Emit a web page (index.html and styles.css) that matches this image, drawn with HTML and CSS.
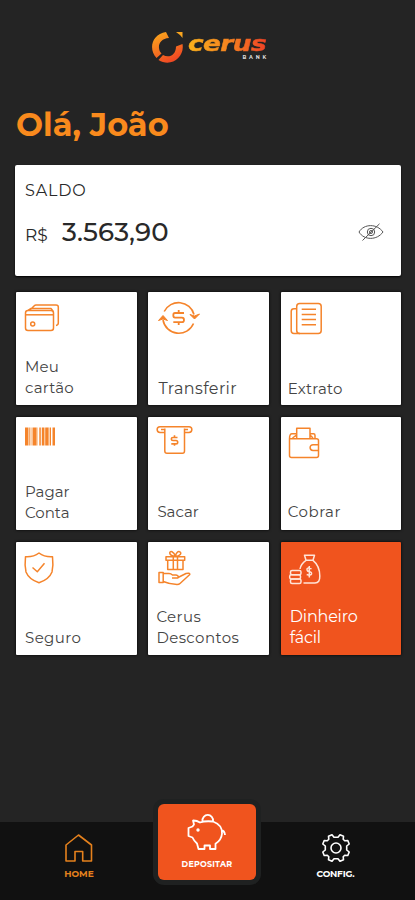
FILE: index.html
```html
<!DOCTYPE html>
<html lang="pt-BR">
    <head>
        <meta charset="UTF-8">
        <title>Cerus Bank</title>
        <link rel="stylesheet" href="styles.css">
    </head>
    <body>
        <div id="app">
            <div class="logo">
                <svg width="34" height="34" viewBox="0 0 34 34">
                    <defs>
                        <linearGradient id="fire" x1="0" y1="0" x2=".5" y2="1">
                            <stop offset="0" stop-color="#fbae1c"/>
                            <stop offset="1" stop-color="#f04a23"/>
                        </linearGradient>
                    </defs>
                    <path d="M15 2 L18 8 C11 8.500 7.500 13 8 18 C8.300 20.500 9 22 10.500 23.500 L5.500 28 C-3 19 1 4 15 2Z M7.500 30 L12 25 C18 28.500 25 25 25 16.500 L31.500 14 C34 27 20 38 7.500 30Z" fill="url(#fire)"/>
                    <path d="M25 2 H31.500 V8 L29 5Z" fill="#f9a51f"/>
                </svg>
                <div class="brand">
                    <span class="name">cerus</span>
                    <span class="bank">BANK</span>
                </div>
            </div>
            <h1>Olá, João</h1>
            <div class="saldo">
                <div class="title">SALDO</div>
                <div class="row">
                    <span class="moeda">R$</span>
                    <span class="valor">3.563,90</span>
                    <svg class="eye" width="26" height="18" viewBox="0 0 26 18">
                        <path d="M1 9 C6 .5 19 .5 25 9 C19 17.500 6 17.500 1 9Z"/>
                        <circle cx="13" cy="9" r="3.700"/>
                        <circle cx="13" cy="9" r="1.500"/>
                        <path d="M4.500 17.500 L21.500 .8"/>
                    </svg>
                </div>
            </div>
            <div class="grid">
                <div class="tile">
                    <svg viewBox="0 0 60 48">
                        <path d="M14 18 L18 14 Q19 13 20 13 H40 Q42.300 13 42.300 15 V31 Q42.300 33 40 33.500 M12 18.300 L15 16.500 H35 L37 19"/>
                        <rect x="9.500" y="18.500" width="28" height="20" rx="2.500"/>
                        <path d="M9.500 22.800 H37.500"/>
                        <circle cx="16.700" cy="32" r="2"/>
                    </svg>
                    <p>Meu<br>cartão</p>
                </div>
                <div class="tile transferir">
                    <svg viewBox="0 0 60 48">
                        <path d="M16.200 19.500 A16 16 0 0 1 46 22.500 M45.500 31.500 A16 16 0 0 1 15 28" stroke-width="1.600"/>
                        <path class="head" d="M10.500 28.500 L15 23.500 L19.500 28.500 L15 27Z M42 22.500 L46.500 27 L51.500 22 L46.500 24Z"/>
                        <path d="M36 21 H27 Q25.300 21 25.300 23.300 Q25.300 25.600 27 25.600 H34 Q36 25.600 36 28 Q36 30.200 34 30.200 H25.300 M30.700 18 V21 M30.700 30 V33" stroke-width="1.800"/>
                    </svg>
                    <p>Transferir</p>
                </div>
                <div class="tile extrato">
                    <svg viewBox="0 0 60 48">
                        <rect x="15.700" y="11.500" width="24.500" height="30" rx="3"/>
                        <path d="M15.700 16.800 H13 Q10.200 16.800 10.200 19.500 V38.500 Q10.200 41.500 13 41.500 H19"/>
                        <path d="M20.700 17.200 H35 M20.700 22.500 H35 M20.700 27.500 H35 M20.700 32.800 H35"/>
                    </svg>
                    <p>Extrato</p>
                </div>
                <div class="tile conta">
                    <svg viewBox="0 0 60 48">
                        <path class="bars" d="M9 10.500 h3 v18 h-3z M13.300 10.500 h1 v18 h-1z M16.500 10.500 h4.200 v18 h-4.200z M23.300 10.500 h1.500 v18 h-1.500z M25.800 10.500 h2.200 v18 h-2.200z M29.200 10.500 h3.500 v18 h-3.500z M34 10.500 h1 v18 h-1z M36.500 10.500 h2.500 v18 h-2.500z"/>
                        <path class="thin" d="M12.500 10.500 V28.500 M15.300 10.500 V28.500 M21.300 10.500 V28.500 M28.500 10.500 V28.500 M33.300 10.500 V28.500"/>
                    </svg>
                    <p>Pagar<br>Conta</p>
                </div>
                <div class="tile sacar">
                    <svg viewBox="0 0 60 48">
                        <path d="M16.800 15.400 H12 A2.800 2.800 0 0 1 12 9.700 H41 A2.800 2.800 0 0 1 41 15.400 H36.500"/>
                        <path d="M13 12.500 H16.800 M36.500 12.500 H40 M16.800 11.500 V34 Q16.800 36.300 19 36.300 H34.500 Q36.500 36.300 36.500 34 V11.500"/>
                        <path d="M29.500 20.500 H25 Q23.300 20.500 23.300 22 Q23.300 23.500 25 23.500 H28 Q29.700 23.500 29.700 25.200 Q29.700 26.900 28 26.900 H23.300 M26.500 18.300 V20.700 M26.500 26.400 V28.800" stroke-width="1.600"/>
                    </svg>
                    <p>Sacar</p>
                </div>
                <div class="tile cobrar">
                    <svg viewBox="0 0 60 48">
                        <path d="M8.500 21.700 V38.500 Q8.500 40.500 10.500 40.500 H35.500 Q37.500 40.500 37.500 38.500 V23.500 Q37.500 21.700 35.500 21.700 Z M8.500 21.700 Q8.500 16.800 11 16.800 H15.700 M15.700 21.500 V11.200 H29 V21.500 M29 16.800 H32.500 Q34 16.800 34 18.500 V21.500 M11.500 21 L15.500 18 M29 18 L32 21"/>
                        <path d="M37.500 27.700 H32 A2.900 2.900 0 0 0 32 33.500 H37.500"/>
                    </svg>
                    <p>Cobrar</p>
                </div>
                <div class="tile seguro">
                    <svg viewBox="0 0 60 48">
                        <path d="M23 11 Q28.500 15.200 36.500 14.700 Q37.500 23 36 30 Q33 37.500 23 40.700 Q13 37.500 10 30 Q8.500 23 9.500 14.700 Q17.500 15.200 23 11Z"/>
                        <path d="M16.500 25.500 L21.300 29.700 L28.500 21.300"/>
                    </svg>
                    <p>Seguro</p>
                </div>
                <div class="tile descontos">
                    <svg viewBox="0 0 60 48">
                        <path d="M18 14.700 H36.700 V18.300 H18Z M19.700 18.300 V27.500 H35 V18.300 M25.300 15 V27.500 M29.500 15 V27.500 M27.300 14.500 C20 13.500 21 8.500 24 9.800 Q26.500 11 27.300 14.500 C28 11 30 9 31.500 9.700 C34.500 11 32 14 27.300 14.500"/>
                        <path d="M11 30.500 H15.200 V40.500 H11Z M15.200 31.500 H21 Q23 31.500 24.500 33 H28 Q31 33.500 30 36 H24 M30 35.500 L38 31.500 Q42 30.500 41.800 32.500 L32 41.500 Q31 42.500 29 42.500 Q21 42 15.200 39.500"/>
                    </svg>
                    <p>Cerus<br>Descontos</p>
                </div>
                <div class="tile dinheiro">
                    <svg viewBox="0 0 60 48">
                        <path d="M25 18.300 L23.500 13.200 H33.500 L32 18.300Z M25 18.300 C21 21 19.500 24 19 27 M32 18.300 C36.500 22 38.800 26 38.800 34 Q39 41 34 41 H22.500"/>
                        <path d="M30.500 26.800 Q25.500 25 26 27.800 Q26.200 29.500 28.300 29.700 Q31 30 30.500 32 Q30 33.800 25.700 32.500 M28.300 24 V35.500"/>
                        <rect x="9.500" y="28.500" width="10.500" height="4.200" rx="1.500"/>
                        <rect x="8.700" y="32.700" width="10.800" height="4.200" rx="1.500"/>
                        <rect x="9.500" y="36.900" width="10.500" height="4.600" rx="1.500"/>
                    </svg>
                    <p>Dinheiro<br>fácil</p>
                </div>
            </div>
            <div id="nav">
                <div class="item home">
                    <svg width="30" height="30" viewBox="0 0 30 30">
                        <path d="M2 28 V12 L14.500 2 L27.500 12 V28 H18.700 V18.500 H11 V28Z"/>
                    </svg>
                    <span>HOME</span>
                </div>
                <div class="item depositar">
                    <svg width="40" height="40" viewBox="0 0 40 40">
                        <path d="M15.500 9 A5.300 5.300 0 1 1 26 9"/>
                        <path d="M13 10.500 Q18 8.700 26 9.500 Q35.500 13 35 21.500 Q34.500 28 28.500 31.800 V37 H23 V33.500 H17.500 V37 H11.500 L10 31.500 Q7 29 5.500 25.500 L1.500 24 V16 L5.500 14.500 L7 12.500 L6 8.500 Q9.500 8.300 13 10.500Z M34.500 18.500 Q37.500 18.500 38 23"/>
                        <circle cx="11" cy="18" r=".8"/>
                    </svg>
                    <span>DEPOSITAR</span>
                </div>
                <div class="item config">
                    <svg width="30" height="30" viewBox="0 0 30 30">
                        <path d="M11 1.800 L13 4.300 H17 L19 1.800 L22.500 3.200 L22.200 6.300 L23.700 7.800 L26.800 7.500 L28.200 11 L25.700 13 V17 L28.200 19 L26.800 22.500 L23.700 22.200 L22.200 23.700 L22.500 26.800 L19 28.200 L17 25.700 H13 L11 28.200 L7.500 26.800 L7.800 23.700 L6.300 22.200 L3.200 22.500 L1.800 19 L4.300 17 V13 L1.800 11 L3.200 7.500 L6.300 7.800 L7.800 6.300 L7.500 3.200Z"/>
                        <circle cx="15" cy="15" r="5"/>
                    </svg>
                    <span>CONFIG.</span>
                </div>
            </div>
        </div>
    </body>
</html>
```
FILE: styles.css
```css
*{
    margin: 0;
    padding: 0;
    box-sizing: border-box;
}
body{
    background: #242424;
    font-family: Montserrat, Inter, "Open Sans", sans-serif;
}
svg{
    display: block;
    fill: none;
    stroke-linejoin: round;
    flex-shrink: 0;
}
#app{
    width: 415px;
    height: 900px;
    display: flex;
    flex-direction: column;
    overflow: hidden;
}
.logo{
    height: 66px;
    padding: 30px 0 0 151px;
    display: flex;
}
.brand{
    width: 81px;
    margin-left: 3px;
    display: flex;
    flex-direction: column;
}
.brand .name{
    width: 69px;
    font: italic bold 22px/22px "DejaVu Sans", sans-serif;
    letter-spacing: -0.5px;
    margin-top: 3px;
    background: linear-gradient(90deg, #fbb11c, #f58220 50%, #ee3a26);
    -webkit-background-clip: text;
    background-clip: text;
    color: transparent;
    -webkit-text-stroke: 0.5px transparent;
    transform: scaleX(1.2);
    transform-origin: left;
}
.brand .bank{
    font-size: 5px;
    line-height: 6px;
    font-weight: 700;
    letter-spacing: 2.8px;
    color: #ddd;
    align-self: flex-end;
    margin-top: -1px;
}
h1{
    height: 99px;
    padding: 39px 0 0 16px;
    font-size: 32px;
    line-height: 40px;
    font-weight: 700;
    color: #f98a1d;
}
.saldo{
    width: 386px;
    height: 111px;
    margin-left: 15px;
    padding: 16px 17px 0 10px;
    background: #fff;
    border-radius: 2px;
    box-shadow: 0 1px 2px #000;
    color: #292929;
}
.saldo .title{
    font-size: 16px;
    line-height: 20px;
    letter-spacing: 0.8px;
}
.saldo .row{
    display: flex;
    align-items: baseline;
    margin-top: 15px;
}
.moeda{
    width: 37px;
    font-size: 17px;
}
.valor{
    font-size: 26px;
    line-height: 32px;
    font-weight: 500;
    letter-spacing: 0.1px;
}
.eye{
    margin-left: auto;
    align-self: center;
    stroke: #555;
}
.grid{
    display: grid;
    grid-template-columns: repeat(3, 120.6px);
    grid-auto-rows: 113px;
    gap: 12px 11.8px;
    margin: 16px 0 0 16px;
}
.tile{
    display: flex;
    flex-direction: column;
    justify-content: space-between;
    background: #fff;
    border-radius: 1px;
    box-shadow: 0 0 3px #000;
    color: #444;
}
.tile svg{
    width: 60px;
    height: 48px;
    stroke: #f5842b;
    stroke-width: 1.5;
}
.tile p{
    padding: 0 0 7px 9px;
    font-size: 15px;
    line-height: 20.5px;
    letter-spacing: 0.2px;
}
.tile .bars{
    fill: #f5842b;
    stroke: none;
}
.tile .head{
    fill: #f5842b;
    stroke-width: 1;
}
.tile .thin{
    stroke: #fbc699;
    stroke-width: 1;
}
.transferir p{
    padding-left: 10px;
    padding-bottom: 6px;
    font-size: 16px;
    letter-spacing: 0.4px;
}
.extrato p{
    padding-bottom: 6px;
    padding-left: 7px;
}
.conta p{
    letter-spacing: 0;
}
.sacar p{
    padding-bottom: 8px;
    letter-spacing: 0;
}
.cobrar p{
    padding-left: 7px;
    padding-bottom: 8px;
    letter-spacing: 0.5px;
}
.seguro p{
    padding-bottom: 7px;
    letter-spacing: 0.4px;
}
.descontos p{
    padding-left: 8px;
    padding-bottom: 7px;
    letter-spacing: 0.4px;
}
.dinheiro{
    background: #f0541e;
    color: #fff;
}
.dinheiro p{
    padding-bottom: 7px;
    font-size: 16px;
    letter-spacing: -0.2px;
}
.dinheiro svg{
    stroke: #ffe4d8;
}
#nav{
    height: 78px;
    margin-top: auto;
    background: #111;
    display: flex;
    align-items: flex-start;
}
.item{
    display: flex;
    flex-direction: column;
    align-items: center;
    font-size: 9px;
    line-height: 10px;
    font-weight: 700;
    color: #fff;
}
.item svg{
    stroke: #fff;
    stroke-width: 1.6;
}
.item span{
    margin-top: 6px;
}
.home{
    width: 158px;
    padding-top: 11px;
    color: #e5811d;
}
.home svg{
    stroke: #e5811d;
}
.depositar{
    width: 98px;
    height: 76px;
    margin-top: -18px;
    padding-top: 8px;
    background: #f0541e;
    border-radius: 6px;
    box-shadow: 0 0 0 5px #1f2121;
    font-size: 8px;
    letter-spacing: 0.2px;
}
.depositar svg{
    stroke-width: 1.8;
}
.depositar span{
    margin-top: 7px;
}
.config{
    flex: 1;
    padding-top: 11px;
}
.config span{
    letter-spacing: -0.2px;
}
```
